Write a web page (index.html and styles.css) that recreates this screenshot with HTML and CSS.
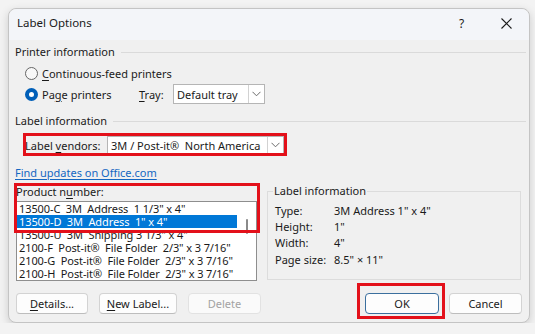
FILE: index.html
```html
<!DOCTYPE html>
<html lang="en">
<head>
<meta charset="utf-8">
<title>Label Options</title>
<link rel="stylesheet" href="styles.css">
</head>
<body>
<div class="dialog">
  <div class="titlebar">
    <span class="title">Label Options</span>
    <div class="caption">
      <span class="cap-btn help">?</span>
      <span class="cap-btn close"><svg width="11" height="11" viewBox="0 0 11 11"><path d="M0.5 0.5 L10.5 10.5 M10.5 0.5 L0.5 10.5" stroke="#1a1a1a" stroke-width="1.1" fill="none"/></svg></span>
    </div>
  </div>
  <div class="client">
    <div class="section-head"><span>Printer information</span><i class="rule"></i></div>
    <div class="row row-radio1">
      <span class="radio"></span><span><u>C</u>ontinuous-feed printers</span>
    </div>
    <div class="row row-radio2">
      <span class="radio checked"></span><span class="radio-label">Pa<u>g</u>e printers</span>
      <span class="tray-label"><u>T</u>ray:</span>
      <div class="combo combo-tray"><span class="combo-text">Default tray</span><span class="drop"><svg width="9" height="6" viewBox="0 0 9 6"><path d="M0.5 0.8 L4.5 4.8 L8.5 0.8" stroke="#6b6b6b" stroke-width="1" fill="none"/></svg></span></div>
    </div>
    <div class="section-head head2"><span>Label information</span><i class="rule"></i></div>
    <div class="vendor-row">
      <span class="vendor-label">Label <u>v</u>endors:</span>
      <div class="combo combo-vendor"><span class="combo-text">3M / Post-it®&nbsp; North America</span><span class="drop"><svg width="9" height="6" viewBox="0 0 9 6"><path d="M0.5 0.8 L4.5 4.8 L8.5 0.8" stroke="#6b6b6b" stroke-width="1" fill="none"/></svg></span></div>
      <span class="mark mark-vendor"></span>
    </div>
    <a class="link" href="#">Find updates on Office.com</a>
    <div class="lower">
      <div class="product">
        <div class="plabel">Product n<u>u</u>mber:</div>
        <div class="list">
          <div class="items">
            <div class="item">13500-C  3M  Address  1 1/3" x 4"</div>
            <div class="item selected">13500-D  3M  Address  1" x 4"</div>
            <div class="item">13500-U  3M  Shipping 3 1/3" x 4"</div>
            <div class="item">2100-F  Post-it®  File Folder  2/3" x 3 7/16"</div>
            <div class="item">2100-G  Post-it®  File Folder  2/3" x 3 7/16"</div>
            <div class="item">2100-H  Post-it®  File Folder  2/3" x 3 7/16"</div>
          </div>
          <div class="scroll"><span class="thumb"></span></div>
        </div>
        <span class="mark mark-product"></span>
      </div>
      <fieldset class="info">
        <legend>Label information</legend>
        <div class="info-grid">
          <span>Type:</span><span>3M Address 1" x 4"</span>
          <span>Height:</span><span>1"</span>
          <span>Width:</span><span>4"</span>
          <span>Page size:</span><span>8.5" × 11"</span>
        </div>
      </fieldset>
    </div>
    <div class="buttons">
      <div class="btn-group">
        <button class="btn btn-details"><u>D</u>etails...</button>
        <button class="btn btn-new"><u>N</u>ew Label...</button>
        <button class="btn btn-delete" disabled>Delete</button>
      </div>
      <div class="btn-group right">
        <button class="btn btn-ok">OK<span class="mark mark-ok"></span></button>
        <button class="btn btn-cancel">Cancel</button>
      </div>
    </div>
  </div>
</div>
</body>
</html>
```
FILE: styles.css
```css
html, body {
  margin: 0;
  background: #f3f3f3;
}
body {
  padding: 8px 0 0 8px;
  font-family: "Noto Sans", "Open Sans", sans-serif;
  font-size: 11px;
  color: #1a1a1a;
}
u { text-decoration-thickness: 1px; text-underline-offset: 2px; }

.dialog {
  width: 522px;
  box-sizing: border-box;
  border: 1px solid #c4c4c4;
  border-radius: 8px;
  background: #f0f0f0;
  box-shadow: 0 3px 10px rgba(0,0,0,0.16);
}

.titlebar {
  height: 31px;
  display: flex;
  align-items: flex-start;
  justify-content: space-between;
  background: #f3f5f9;
  border-radius: 8px 8px 0 0;
}
.title {
  padding: 6px 0 0 8px;
  line-height: 16px;
  font-size: 11.5px;
}
.caption { display: flex; }
.cap-btn {
  width: 45px;
  height: 30px;
  display: flex;
  align-items: center;
  justify-content: center;
}
.cap-btn.help { font-size: 12px; padding-bottom: 1px; box-sizing: border-box; }
.cap-btn.close { padding-bottom: 1px; box-sizing: border-box; }

.client {
  padding: 4px 7px 8px 6px;
  display: flex;
  flex-direction: column;
}

.section-head {
  display: flex;
  align-items: center;
  line-height: 16px;
  margin-right: -4px;
}
.section-head .rule {
  flex: 1;
  height: 0;
  border-top: 1px solid #dadada;
  margin-left: 6px;
  margin-top: 1px;
}
.head2 { margin-top: 9px; }

.row {
  display: flex;
  align-items: center;
  padding-left: 10px;
}
.row-radio1 { height: 20px; margin-top: 3px; }
.row-radio2 { height: 20px; margin-top: 1px; }

.radio {
  width: 11px;
  height: 11px;
  border: 1px solid #666;
  border-radius: 50%;
  background: #f8f8f8;
  margin-right: 4px;
  flex: none;
}
.radio.checked {
  width: 5px;
  height: 5px;
  border: 4px solid #005fb8;
  background: #fff;
}
.radio-label { width: 97px; }
.tray-label { width: 34px; }

.combo {
  display: flex;
  align-items: center;
  box-sizing: border-box;
  background: #fff;
  border: 1px solid #b5b5b5;
}
.combo-text { flex: 1; padding-left: 3px; white-space: nowrap; }
.drop {
  align-self: stretch;
  width: 15px;
  border-left: 1px solid #d2d2d2;
  display: flex;
  align-items: center;
  justify-content: center;
}
.combo-tray { width: 92px; height: 20px; }
.combo-vendor { width: 177px; height: 18px; }

.vendor-row {
  position: relative;
  display: flex;
  align-items: center;
  margin: 7px 0 0 10px;
  width: 259px;
  height: 18px;
}
.vendor-label { width: 82px; }

.mark {
  position: absolute;
  border: 3px solid #e3101a;
  pointer-events: none;
}
.mark-vendor { left: -2px; top: -3px; right: -3px; bottom: -2px; }

.link {
  margin-top: 11px;
  line-height: 16px;
  color: #1467c2;
  text-decoration: underline;
  text-underline-offset: 2px;
  align-self: flex-start;
}

.lower {
  display: flex;
  margin-top: 2px;
  gap: 10px;
}
.product {
  position: relative;
  width: 241px;
  margin-left: 1px;
}
.plabel { line-height: 17px; }
.list {
  margin-top: 1px;
  height: 80px;
  box-sizing: border-box;
  border: 1px solid #8e8e8e;
  background: #fff;
  display: flex;
  overflow: hidden;
}
.items { width: 220px; flex: none; }
.item {
  height: 13px;
  line-height: 13px;
  white-space: pre;
  padding-left: 2px;
  letter-spacing: -0.1px;
}
.item.selected { background: #0078d7; color: #fff; }
.scroll {
  flex: 1;
  display: flex;
  justify-content: center;
}
.thumb {
  width: 2px;
  height: 15px;
  margin-top: 17px;
  background: #8a8a8a;
  border-radius: 1px;
}
.mark-product { left: -2px; top: 0; right: -3px; height: 50px; box-sizing: border-box; }

.info {
  margin: 0;
  width: 254px;
  box-sizing: border-box;
  height: 97px;
  border: 1px solid #dcdcdc;
  padding: 0 5px;
}
.info legend {
  padding: 0 1px;
  line-height: 16px;
}
.info-grid {
  display: grid;
  grid-template-columns: 59px auto;
  line-height: 16px;
  margin: 4px 0 0 2px;
}
.info-grid span:nth-child(7), .info-grid span:nth-child(8) { margin-top: 1px; }

.buttons {
  display: flex;
  margin-top: 12px;
}
.btn-group { display: flex; gap: 11px; margin-left: 1px; }
.btn-group.right { margin-left: auto; gap: 10px; }
.btn {
  position: relative;
  height: 21px;
  box-sizing: border-box;
  border: 1px solid #d3d3d3;
  border-bottom-color: #bdbdbd;
  border-radius: 4px;
  background: #fdfdfd;
  font-family: inherit;
  font-size: 11px;
  color: #1a1a1a;
  padding: 0;
}
.btn-details { width: 72px; }
.btn-new { width: 78px; }
.btn-delete { width: 73px; color: #a3a3a3; border-color: #e2e2e2; background: #fafafa; }
.btn-ok { width: 74px; border: 1px solid #3b6f9e; }
.btn-cancel { width: 73px; }
.mark-ok { left: -9px; top: -11px; right: -7px; bottom: -6px; }
```
